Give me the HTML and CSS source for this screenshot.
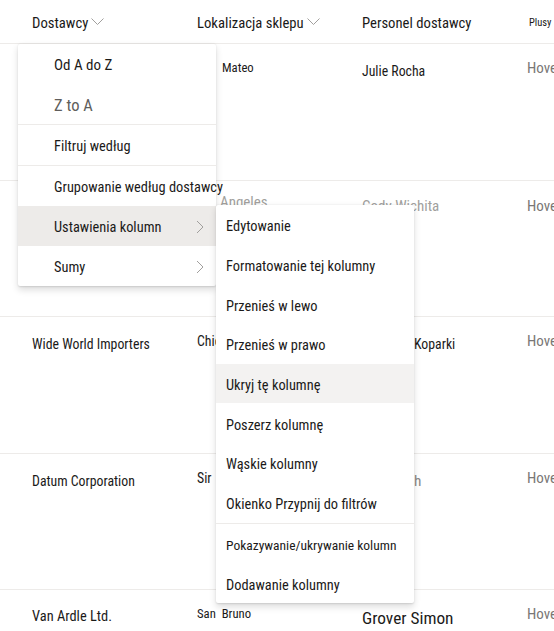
FILE: index.html
```html
<!DOCTYPE html>
<html lang="pl">
<head>
<meta charset="utf-8">
<link rel="stylesheet" href="styles.css">
</head>
<body>
<div class="page">
  <div class="row head">
    <div class="hcell">Dostawcy<svg class="chev" width="13" height="7" viewBox="0 0 13 7"><polyline points="0.5,0.5 6.5,6.5 12.5,0.5"/></svg></div>
    <div class="hcell">Lokalizacja sklepu<svg class="chev" width="13" height="7" viewBox="0 0 13 7"><polyline points="0.5,0.5 6.5,6.5 12.5,0.5"/></svg></div>
    <div class="hcell">Personel dostawcy</div>
    <div class="hcell small">Plusy</div>
  </div>

  <div class="row">
    <div class="cell c1"></div>
    <div class="cell c2 s11 off25">Mateo</div>
    <div class="cell c3 s12">Julie Rocha</div>
    <div class="cell c4">Hovepark</div>
  </div>

  <div class="row">
    <div class="cell c1"></div>
    <div class="cell c2 s13 faded up off23">Angeles</div>
    <div class="cell c3 s13 faded up2">Cody Wichita</div>
    <div class="cell c4 up2">Hovepark</div>
  </div>

  <div class="row">
    <div class="cell c1 s12">Wide World Importers</div>
    <div class="cell c2 s12">Chicago</div>
    <div class="cell c3 s12 off52"><span class="patch">Koparki</span></div>
    <div class="cell c4">Hovepark</div>
  </div>

  <div class="row">
    <div class="cell c1 s12">Datum Corporation</div>
    <div class="cell c2 s12"><span class="patch">Sir</span></div>
    <div class="cell c3 s133 grey off52">h</div>
    <div class="cell c4">Hovepark</div>
  </div>

  <div class="row">
    <div class="cell c1 s125">Van Ardle Ltd.</div>
    <div class="cell c2 s11"><span class="patch">San&nbsp; Bruno&nbsp;</span></div>
    <div class="cell c3 s15">Grover Simon</div>
    <div class="cell c4">Hovepark</div>
  </div>

  <div class="menu main">
    <div class="item big">Od A do Z</div>
    <div class="item big muted">Z to A</div>
    <div class="divider"></div>
    <div class="item">Filtruj według</div>
    <div class="divider"></div>
    <div class="item">Grupowanie według dostawcy</div>
    <div class="item sub active">Ustawienia kolumn<svg class="arrow" width="8" height="14" viewBox="0 0 8 14"><polyline points="1,1 7,7 1,13"/></svg></div>
    <div class="item sub">Sumy<svg class="arrow" width="8" height="14" viewBox="0 0 8 14"><polyline points="1,1 7,7 1,13"/></svg></div>
  </div>

  <div class="menu submenu">
    <div class="item">Edytowanie</div>
    <div class="item">Formatowanie tej kolumny</div>
    <div class="item">Przenieś w lewo</div>
    <div class="item">Przenieś w prawo</div>
    <div class="item hover">Ukryj tę kolumnę</div>
    <div class="item">Poszerz kolumnę</div>
    <div class="item">Wąskie kolumny</div>
    <div class="item">Okienko Przypnij do filtrów</div>
    <div class="divider"></div>
    <div class="item small12">Pokazywanie/ukrywanie kolumn</div>
    <div class="item s125">Dodawanie kolumny</div>
  </div>
</div>
</body>
</html>
```

FILE: styles.css
```css
html, body {
  margin: 0;
  padding: 0;
  background: #ffffff;
  overflow: hidden;
}

.page {
  position: relative;
  width: 554px;
  height: 631px;
  overflow: hidden;
  font-family: "Roboto Condensed", "Liberation Sans", Arial, sans-serif;
  color: #1b1a19;
}

.row {
  display: grid;
  grid-template-columns: 165px 165px 165px 165px;
  padding-left: 32px;
  height: 136.5px;
  box-sizing: border-box;
  border-bottom: 1px solid #edebe9;
}

.row.head {
  height: 44px;
  align-items: center;
  padding-top: 3px;
}

.hcell {
  display: flex;
  align-items: center;
  gap: 2px;
  font-size: 14.7px;
  color: #1b1a19;
  white-space: nowrap;
}

.hcell.small {
  font-size: 10.5px;
  padding-left: 2px;
  margin-top: -2px;
}

.chev {
  margin-left: 1px;
  margin-top: -3px;
}

.chev polyline,
.arrow polyline {
  fill: none;
  stroke: #a19f9d;
  stroke-width: 1;
}

.cell {
  white-space: nowrap;
  line-height: 16px;
  font-size: 13.8px;
}

.c1 { padding-top: 19px; }
.c2 { padding-top: 16px; }
.c3 { padding-top: 19px; }
.c4 {
  padding-top: 16px;
  font-size: 15px;
  color: #797775;
}

.up { padding-top: 13px; }
.up2 { padding-top: 17px; }

.off23 { padding-left: 23px; }
.off25 { padding-left: 25px; }
.off52 { padding-left: 52px; }

.s11 { font-size: 12.7px; }
.s12 { font-size: 13.8px; }
.s125 { font-size: 14.4px; }
.s13 { font-size: 15px; }
.s133 { font-size: 15.3px; }
.s15 { font-size: 17.3px; padding-top: 20px; }

.faded { color: #a19f9d; }
.grey { color: #8a8886; }

.patch {
  background: #ffffff;
}

.menu {
  position: absolute;
  background: #ffffff;
  border-radius: 2px;
  box-shadow: 0 3.2px 7.2px 0 rgba(0, 0, 0, 0.132), 0 0.6px 1.8px 0 rgba(0, 0, 0, 0.108);
  display: flex;
  flex-direction: column;
}

.menu.main {
  left: 18px;
  top: 44px;
  width: 198px;
}

.menu.submenu {
  left: 216px;
  top: 205px;
  width: 198px;
}

.item {
  height: 40px;
  display: flex;
  align-items: center;
  justify-content: space-between;
  font-size: 14.4px;
  color: #1b1a19;
  white-space: nowrap;
  box-sizing: border-box;
  flex: none;
}

.main .item {
  padding-left: 36px;
  padding-right: 12px;
  padding-top: 2px;
}

.submenu .item {
  padding-left: 10px;
  padding-right: 10px;
  padding-top: 4px;
  height: 39.7px;
}

.item.big {
  font-size: 15px;
}

.item.muted {
  color: #605e5c;
  font-size: 16.5px;
}

.item.small12 {
  font-size: 13.5px;
}

.item.s125 {
  font-size: 14.4px;
}

.item.active {
  background: #edebe9;
}

.item.hover {
  background: #f3f2f1;
}

.divider {
  height: 1px;
  background: #edebe9;
  flex: none;
}
```
